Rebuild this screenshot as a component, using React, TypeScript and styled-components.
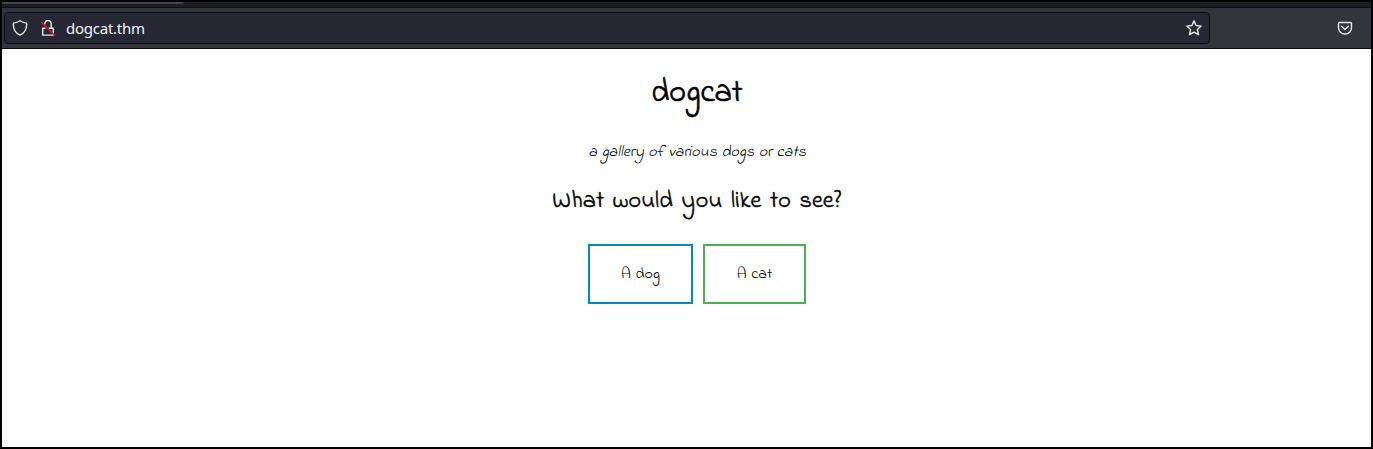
import React from "react";
import styled, { createGlobalStyle } from "styled-components";

const GlobalStyle = createGlobalStyle`
  * { box-sizing: border-box; }
  body { margin: 0; background: #fff; overflow: hidden; }
`;

const Window = styled.div`
  display: flex;
  flex-direction: column;
  height: 449px;
  border: 2px solid #000;
  background: #fff;
`;

const TabStrip = styled.div`
  flex: none;
  height: 6px;
  background: #1c1c23;
  border-bottom: 1px solid #0f1014;
`;

const ActiveTab = styled.div`
  width: 182px;
  height: 2px;
  background: #42434c;
  border-radius: 0 0 2px 0;
`;

const Toolbar = styled.div`
  flex: none;
  display: flex;
  align-items: flex-start;
  height: 41px;
  padding: 4px 18px 0 2px;
  background: #33353d;
  border-bottom: 1px solid #08080a;
`;

const AddressBar = styled.div`
  display: flex;
  align-items: center;
  width: 1206px;
  height: 32px;
  padding: 0 7px;
  background: #262833;
  border: 1px solid #0b0c12;
  border-radius: 4px;
`;

const Icon = styled.svg<{ $gap?: number }>`
  flex: none;
  display: block;
  width: 16px;
  height: 16px;
  margin-right: ${(p) => p.$gap ?? 0}px;
  fill: none;
  stroke: #e9e9ec;
  stroke-width: 1.4;
  stroke-linecap: round;
  stroke-linejoin: round;
`;

const Address = styled.span`
  flex: 1;
  padding-bottom: 1px;
  color: #f4f4f8;
  font: 15px/22px "Noto Sans", sans-serif;
  letter-spacing: -0.25px;
`;

const ToolbarAction = styled.div`
  display: flex;
  align-items: center;
  height: 32px;
  margin-left: auto;
`;

const Page = styled.main`
  flex: 1;
  display: flex;
  flex-direction: column;
  align-items: center;
  padding: 22px 0 0 21px;
  color: #000;
  font-family: "Indie Flower", Lato, sans-serif;
`;

const Title = styled.h1`
  margin: 0;
  font-size: 32px;
  line-height: 46px;
  font-weight: 400;
  -webkit-text-stroke: 0.7px #000;
`;

const Subtitle = styled.i`
  margin-top: 23px;
  font-size: 16px;
  line-height: 24px;
  word-spacing: 0.6px;
`;

const Question = styled.h2`
  margin: 20px 0 0;
  font-size: 24px;
  line-height: 36px;
  font-weight: 400;
  letter-spacing: 0.2px;
  word-spacing: 2.4px;
  -webkit-text-stroke: 0.5px #000;
`;

const Choices = styled.div`
  display: flex;
  gap: 10px;
  margin-top: 24px;
`;

const Choice = styled.a<{ $color: string; $width: number }>`
  display: flex;
  align-items: center;
  justify-content: center;
  width: ${(p) => p.$width}px;
  height: 60px;
  border: 2px solid ${(p) => p.$color};
  color: #000;
  font-size: 16px;
  line-height: 24px;
  word-spacing: 0.6px;
`;

export default function App() {
  return (
    <>
      <GlobalStyle />
      <Window>
        <TabStrip>
          <ActiveTab />
        </TabStrip>
        <Toolbar>
          <AddressBar>
            <Icon $gap={12} viewBox="0 0 16 16">
              <path d="M8 .8C6.3 2 4 2.8 1.4 3.1C1 8.5 3 12.8 8 15.2C13 12.8 15 8.5 14.6 3.1C12 2.8 9.7 2 8 .8Z" />
            </Icon>
            <Icon $gap={10} viewBox="0 0 16 16">
              <path d="M4.8 4V3.7a3.2 3.2 0 0 1 6.4 0V8M5 8.2H2.7v6.9h10.6V8.2H9" />
              <path d="M1.5 2.3L14.5 15.3" stroke="#e2143f" />
            </Icon>
            <Address>dogcat.thm</Address>
            <Icon viewBox="0 0 16 16">
              <path d="M8 .9L10.1 5.5L15.2 6.1L11.4 9.5L12.5 14.7L8 12.2L3.5 14.7L4.6 9.5L.8 6.1L5.9 5.5Z" />
            </Icon>
          </AddressBar>
          <ToolbarAction>
            <Icon viewBox="0 0 16 16">
              <path d="M2.6 2.5h10.8a1.1 1.1 0 0 1 1.1 1.1v4.2a6.5 6.2 0 0 1-13 0V3.6a1.1 1.1 0 0 1 1.1-1.1Z" />
              <path d="M4.6 6.3L8 9.4L11.4 6.3" />
            </Icon>
          </ToolbarAction>
        </Toolbar>
        <Page>
          <Title>dogcat</Title>
          <Subtitle>a gallery of various dogs or cats</Subtitle>
          <Question>What would you like to see?</Question>
          <Choices>
            <Choice $color="#008cba" $width={105}>A dog</Choice>
            <Choice $color="#4caf50" $width={103}>A cat</Choice>
          </Choices>
        </Page>
      </Window>
    </>
  );
}
